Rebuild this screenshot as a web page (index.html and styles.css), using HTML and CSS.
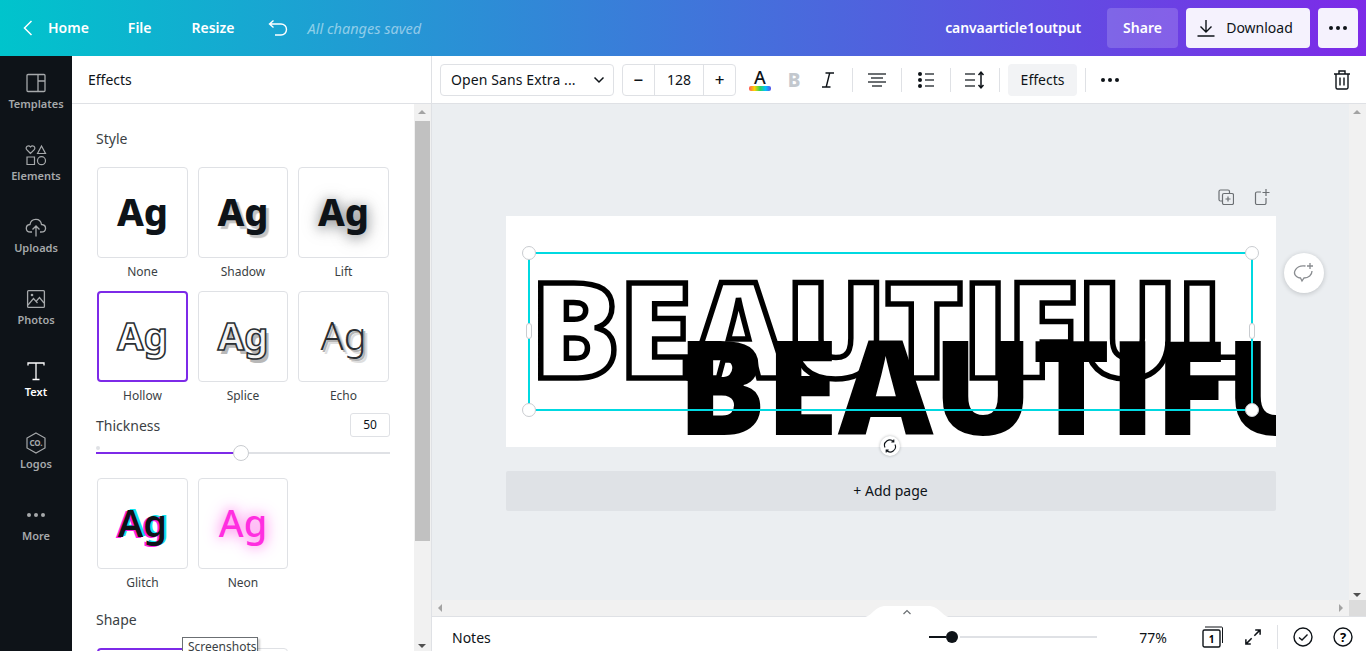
FILE: index.html
```html
<!DOCTYPE html>
<html>
<head>
<meta charset="UTF-8">
<title>canvaarticle1output</title>
<link rel="stylesheet" href="styles.css">
</head>
<body>
<header class="top">
	<svg class="back" width="12" height="18" viewBox="0 0 12 18"><path d="M9.500 2 L2.500 9 L9.500 16" fill="none" stroke="#fff" stroke-width="1.500"/></svg>
	<a class="top-link home">Home</a>
	<a class="top-link file">File</a>
	<a class="top-link resize">Resize</a>
	<svg class="undo" width="20" height="18" viewBox="0 0 20 18"><path d="M5.500 1.500 L1.500 5 L5.500 8.500 M1.500 5 H13 A5.500 5.500 0 0 1 13 16 H7" fill="none" stroke="#fff" stroke-width="1.400"/></svg>
	<span class="saved">All changes saved</span>
	<span class="doc-name">canvaarticle1output</span>
	<a class="btn-share">Share</a>
	<a class="btn-light btn-download">
		<svg width="18" height="18" viewBox="0 0 18 18"><path d="M9 1 V12.500 M3.500 7.500 L9 13 L14.500 7.500 M0.500 17 H17.500" fill="none" stroke="#0e1318" stroke-width="1.400"/></svg>
		Download
	</a>
	<a class="btn-light btn-more"><span class="dots"><i></i><i></i><i></i></span></a>
</header>

<div class="body">
	<nav class="rail">
		<a class="rail-item">
			<svg width="20" height="20" viewBox="0 0 20 20"><path d="M2 1.500 H18 A1 1 0 0 1 19 2.500 V17.500 A1 1 0 0 1 18 18.500 H2 A1 1 0 0 1 1 17.500 V2.500 A1 1 0 0 1 2 1.500 Z M12 1.500 V18.500 M12 8 H19" fill="none" stroke="#a6a9ab" stroke-width="1.300"/></svg>
			Templates
		</a>
		<a class="rail-item">
			<svg width="22" height="22" viewBox="0 0 22 22"><path d="M5.500 9.500 L1.500 5.300 C0 3 3.500 0.500 5.500 3 C7.500 0.500 11 3 9.500 5.300 Z M12.500 9.500 L16.500 2 L20.500 9.500 Z M2 13 H9.500 V20.500 H2 Z" fill="none" stroke="#a6a9ab" stroke-width="1.200"/><circle cx="16.500" cy="16.700" r="4" fill="none" stroke="#a6a9ab" stroke-width="1.200"/></svg>
			Elements
		</a>
		<a class="rail-item">
			<svg width="22" height="20" viewBox="0 0 22 20"><path d="M7 15 H5.500 C0 15 0 8 5 7.500 C6 1 15.500 0.500 16.500 7.500 C22 8 22 15 16 15 H15 M11 19.500 V9.500 M7.500 12.500 L11 9 L14.500 12.500" fill="none" stroke="#a6a9ab" stroke-width="1.300"/></svg>
			Uploads
		</a>
		<a class="rail-item">
			<svg width="20" height="20" viewBox="0 0 20 20"><rect x="1.600" y="1.600" width="16.800" height="16.800" rx="1" fill="none" stroke="#a6a9ab" stroke-width="1.300"/><circle cx="6" cy="6" r="1.300" fill="#a6a9ab"/><path d="M2 16 L7.500 9.500 L11.500 14 M10 12.500 L13.500 8.500 L18 14" fill="none" stroke="#a6a9ab" stroke-width="1.200"/></svg>
			Photos
		</a>
		<a class="rail-item active">
			<svg width="20" height="20" viewBox="0 0 20 20"><path d="M2 4.500 V2 H18 V4.500 M10 2 V18.500 M6.500 18.500 H13.500" fill="none" stroke="#fff" stroke-width="1.300"/></svg>
			Text
		</a>
		<a class="rail-item">
			<svg width="20" height="22" viewBox="0 0 20 22"><path d="M10 1 L19 6 V16 L10 21 L1 16 V6 Z" fill="none" stroke="#a6a9ab" stroke-width="1.200"/><text x="10" y="13.800" class="co">CO.</text></svg>
			Logos
		</a>
		<a class="rail-item">
			<span class="dots dots-rail"><i></i><i></i><i></i></span>
			More
		</a>
	</nav>

	<section class="panel">
		<div class="panel-head">Effects</div>
		<div class="panel-main">
			<div class="panel-scroll">
				<h3 class="panel-h">Style</h3>
				<div class="cards">
					<div class="card"><div class="thumb"><span class="ag ag-none">Ag</span></div><p>None</p></div>
					<div class="card"><div class="thumb"><span class="ag ag-shadow">Ag</span></div><p>Shadow</p></div>
					<div class="card"><div class="thumb"><span class="ag ag-lift">Ag</span></div><p>Lift</p></div>
					<div class="card"><div class="thumb selected"><span class="ag ag-hollow">Ag</span></div><p>Hollow</p></div>
					<div class="card"><div class="thumb"><span class="ag ag-splice">Ag</span></div><p>Splice</p></div>
					<div class="card"><div class="thumb"><span class="ag ag-echo">Ag</span></div><p>Echo</p></div>
				</div>
				<div class="thick-row">
					<span>Thickness</span>
					<span class="thick-val">50</span>
				</div>
				<div class="range">
					<i class="range-dot"></i>
					<i class="range-fill"></i>
					<i class="range-knob"></i>
				</div>
				<div class="cards cards-two">
					<div class="card"><div class="thumb"><span class="ag ag-glitch">Ag</span></div><p>Glitch</p></div>
					<div class="card"><div class="thumb"><span class="ag ag-neon">Ag</span></div><p>Neon</p></div>
				</div>
				<h3 class="panel-h shape-h">Shape</h3>
				<div class="cards cards-two">
					<div class="card"><div class="thumb selected"></div></div>
					<div class="card"><div class="thumb"></div></div>
				</div>
			</div>
			<div class="vbar">
				<span class="arrow-up"></span>
				<span class="vthumb"></span>
				<span class="arrow-down"></span>
			</div>
			<span class="tooltip">Screenshots</span>
		</div>
	</section>

	<main class="work">
		<div class="tools">
			<div class="font-select">
				<span>Open Sans Extra ...</span>
				<svg width="12" height="8" viewBox="0 0 12 8"><path d="M1.500 1.500 L6 6 L10.500 1.500" fill="none" stroke="#0e1318" stroke-width="1.500"/></svg>
			</div>
			<div class="stepper">
				<span class="step">&minus;</span>
				<span class="step-val">128</span>
				<span class="step">+</span>
			</div>
			<div class="tool tool-color">
				<span class="color-a">A</span>
				<i class="rainbow"></i>
			</div>
			<div class="tool tool-b">B</div>
			<div class="tool">
				<svg width="14" height="16" viewBox="0 0 14 16"><path d="M4.500 1 H13 M1 15 H9.500 M8.700 1 L5.200 15" fill="none" stroke="#0e1318" stroke-width="1.400"/></svg>
			</div>
			<i class="sep sep-a"></i>
			<div class="tool tool-mid">
				<svg width="18" height="14" viewBox="0 0 18 14"><path d="M0 1 H18 M3 5 H15 M0 9 H18 M4 13 H14" fill="none" stroke="#3d4145" stroke-width="1.500"/></svg>
			</div>
			<i class="sep"></i>
			<div class="tool tool-mid">
				<svg width="16" height="16" viewBox="0 0 16 16"><circle cx="2" cy="2" r="2" fill="#0e1318"/><circle cx="2" cy="8" r="2" fill="#0e1318"/><circle cx="2" cy="14" r="2" fill="#0e1318"/><path d="M7 2 H16 M7 8 H16 M7 14 H16" fill="none" stroke="#3d4145" stroke-width="1.500"/></svg>
			</div>
			<i class="sep"></i>
			<div class="tool tool-mid">
				<svg width="20" height="18" viewBox="0 0 20 18"><path d="M0 3 H10 M0 9 H10 M0 15 H10" fill="none" stroke="#3d4145" stroke-width="1.500"/><path d="M16 1 V17 M13.500 4 L16 1.200 L18.500 4 M13.500 14 L16 16.800 L18.500 14" fill="none" stroke="#0e1318" stroke-width="1.500"/></svg>
			</div>
			<i class="sep"></i>
			<a class="tool-effects">Effects</a>
			<i class="sep"></i>
			<div class="tool tool-mid"><span class="dots"><i></i><i></i><i></i></span></div>
			<svg class="trash" width="16" height="20" viewBox="0 0 16 20"><path d="M0 4 H16 M5 4 V1 H11 V4 M2 4 V17.500 A1.500 1.500 0 0 0 3.500 19 H12.500 A1.500 1.500 0 0 0 14 17.500 V4 M6 7.500 V15.500 M10 7.500 V15.500" fill="none" stroke="#0e1318" stroke-width="1.400"/></svg>
		</div>

		<div class="stage-row">
			<div class="stage">
				<div class="page-actions">
					<svg width="16" height="16" viewBox="0 0 16 16"><path d="M4 12 H2.500 A1.500 1.500 0 0 1 1 10.500 V2.500 A1.500 1.500 0 0 1 2.500 1 H10 A1.500 1.500 0 0 1 11.500 2.500 V4" fill="none" stroke="#6b6f73" stroke-width="1.200"/><rect x="4.500" y="4.500" width="11" height="11" rx="1.500" fill="none" stroke="#6b6f73" stroke-width="1.200"/><path d="M10 7.500 V12.500 M7.500 10 H12.500" stroke="#6b6f73" stroke-width="1.200"/></svg>
					<svg width="16" height="16" viewBox="0 0 16 16"><path d="M7 3 H3 A1.500 1.500 0 0 0 1.500 4.500 V14 A1.500 1.500 0 0 0 3 15.500 H10.500 A1.500 1.500 0 0 0 12 14 V9 M12 0 V7 M8.500 3.500 H15.500" fill="none" stroke="#6b6f73" stroke-width="1.200"/></svg>
				</div>
				<div class="page">
					<div class="word word-hollow">BEAUTIFUL</div>
					<div class="word word-solid">BEAUTIFUL</div>
					<div class="select-box">
						<i class="h h-tl"></i><i class="h h-tr"></i><i class="h h-bl"></i><i class="h h-br"></i>
						<i class="side side-l"></i><i class="side side-r"></i>
					</div>
				</div>
				<div class="rotate">
					<svg width="14" height="14" viewBox="0 0 14 14"><path d="M2 8.500 A5.300 5.300 0 0 1 10.500 2.500 M12 5.500 A5.300 5.300 0 0 1 3.500 11.500 M10.800 0.500 V3 H8.300 M3.200 13.500 V11 H5.700" fill="none" stroke="#0e1318" stroke-width="1.100"/></svg>
				</div>
				<div class="add-page">+ Add page</div>
				<div class="comment">
					<svg width="22" height="20" viewBox="0 0 22 20"><path d="M12.500 3 C3 1.500 -1 10 3.500 13.500 C5 14.700 6 15 7.500 15 L9 18 L11 15 C15.500 15 19 12 19 8 M17 0 V6 M14 3 H20" fill="none" stroke="#898c90" stroke-width="1.300"/></svg>
				</div>
			</div>
			<div class="vbar vbar-stage">
				<span class="arrow-up"></span>
				<span class="arrow-down"></span>
			</div>
		</div>

		<div class="hbar">
			<div class="hbar-track">
				<span class="arrow-left"></span>
				<span class="arrow-right"></span>
			</div>
			<span class="corner"></span>
		</div>

		<footer class="foot">
			<svg class="notch" width="86" height="13" viewBox="0 0 86 13"><path d="M0 12 C8 12 10 1 22 1 H64 C76 1 78 12 86 12 V13 H0 Z" fill="#fff"/><path d="M39.500 9 L43 5.500 L46.500 9" fill="none" stroke="#6b6f73" stroke-width="1.200"/></svg>
			<span class="notes">Notes</span>
			<div class="zoom-bar">
				<i class="zoom-fill"></i>
				<i class="zoom-knob"></i>
				<i class="zoom-rest"></i>
			</div>
			<span class="pct">77%</span>
			<svg class="pages" width="22" height="22" viewBox="0 0 22 22"><path d="M3 1 H19.500 A1 1 0 0 1 20.500 2 V17" fill="none" stroke="#0e1318" stroke-width="1"/><rect x="1" y="4" width="17" height="17" rx="1.500" fill="#fff" stroke="#0e1318" stroke-width="1.400"/><text x="9.500" y="16.500" class="page-num">1</text></svg>
			<svg class="expand" width="16" height="16" viewBox="0 0 18 18"><path d="M10.500 7.500 L17 1 M11.500 1 H17 V6.500 M7.500 10.500 L1 17 M1 11.500 V17 H6.500" fill="none" stroke="#0e1318" stroke-width="1.700"/></svg>
			<i class="sep foot-sep"></i>
			<svg class="check" width="20" height="20" viewBox="0 0 20 20"><circle cx="10" cy="10" r="9" fill="none" stroke="#0e1318" stroke-width="1.400"/><path d="M6 10.500 L9 13 L14.500 7.500" fill="none" stroke="#0e1318" stroke-width="1.400"/></svg>
			<svg class="help" width="20" height="20" viewBox="0 0 20 20"><circle cx="10" cy="10" r="9" fill="none" stroke="#0e1318" stroke-width="1.400"/><text x="10" y="15" class="q">?</text></svg>
		</footer>
	</main>
</div>
</body>
</html>
```

FILE: styles.css
```css
*{
	padding: 0;
	margin: 0;
	box-sizing: border-box;
}
html, body{
	height: 651px;
	overflow: hidden;
}
body{
	font-family: "Noto Sans", "Open Sans", sans-serif;
	font-size: 14px;
	color: #0e1318;
	display: flex;
	flex-direction: column;
}
i{
	display: block;
}

/* header */
.top{
	height: 56px;
	flex: none;
	display: flex;
	align-items: center;
	background: linear-gradient(90deg, #00c4cc, #7d2ae8);
	color: #fff;
	padding: 0 8px 1px 0;
}
.back{
	margin-left: 22px;
}
.top-link{
	font-weight: 600;
	font-size: 14px;
}
.home{
	margin-left: 14px;
}
.file{
	margin-left: 39px;
}
.resize{
	margin-left: 40px;
}
.undo{
	margin-left: 33px;
}
.saved{
	margin-left: 20px;
	font-size: 14.500px;
	font-style: italic;
	color: rgba(255,255,255,.5);
}
.doc-name{
	margin-left: auto;
	font-weight: 600;
	letter-spacing: -.1px;
}
.btn-share{
	margin-left: 26px;
	width: 71px;
	height: 40px;
	line-height: 40px;
	text-align: center;
	border-radius: 4px;
	background: rgba(255,255,255,.17);
	font-weight: 600;
}
.btn-light{
	height: 40px;
	border-radius: 4px;
	background: #f5f2fd;
	color: #0e1318;
	display: flex;
	align-items: center;
	justify-content: center;
}
.btn-download{
	margin-left: 8px;
	width: 124px;
	gap: 11px;
	padding-right: 6px;
}
.btn-more{
	margin-left: 8px;
	width: 40px;
}
.dots{
	display: flex;
	gap: 3px;
}
.dots i{
	width: 4px;
	height: 4px;
	border-radius: 50%;
	background: #0e1318;
}
.dots-rail i{
	background: #a6a9ab;
}

.body{
	flex: 1;
	display: flex;
	min-height: 0;
}

/* left rail */
.rail{
	width: 72px;
	flex: none;
	background: #0e1318;
}
.rail-item{
	height: 72px;
	display: flex;
	flex-direction: column;
	align-items: center;
	justify-content: center;
	gap: 2px;
	padding-bottom: 2px;
	font-size: 11px;
	font-weight: 600;
	color: #a6a9ab;
}
.rail-item svg, .rail-item .dots{
	height: 22px;
	align-items: center;
}
.rail-item.active{
	color: #fff;
}
.co{
	font-size: 8px;
	font-weight: 700;
	fill: #a6a9ab;
	text-anchor: middle;
}

/* effects panel */
.panel{
	width: 360px;
	flex: none;
	display: flex;
	flex-direction: column;
	border-right: 1px solid #dfe1e5;
}
.panel-head{
	height: 48px;
	flex: none;
	line-height: 47px;
	padding-left: 16px;
	border-bottom: 1px solid #dfe1e5;
}
.panel-main{
	flex: 1;
	display: flex;
	position: relative;
	min-height: 0;
}
.panel-scroll{
	flex: 1;
	overflow: hidden;
	padding: 24px 0 0 24px;
}
.panel-h{
	font-size: 14px;
	font-weight: 400;
	line-height: 22px;
	color: #3b3f44;
}
.cards{
	margin-top: 17px;
	display: grid;
	grid-template-columns: 91px 90px 91px;
	column-gap: 10px;
	row-gap: 11px;
	padding-left: 1px;
}
.card p{
	font-size: 12px;
	line-height: 16px;
	margin-top: 6px;
	text-align: center;
	color: #3b3f44;
}
.thumb{
	height: 91px;
	border: 1px solid #dfe1e5;
	border-radius: 4px;
	display: flex;
	align-items: center;
	justify-content: center;
	padding-bottom: 3px;
}
.thumb.selected{
	border: 2px solid #7d2ae8;
}
.ag{
	font-size: 38px;
	line-height: 1;
	font-weight: 800;
	color: #0e1318;
}
.ag-shadow{
	text-shadow: 3px 3px 1px #c4c4c4;
}
.ag-lift{
	text-shadow: 0 2px 12px rgba(14,19,24,.4), 0 2px 20px rgba(14,19,24,.25);
}
.ag-hollow{
	font-weight: 700;
	color: #fff;
	-webkit-text-stroke: 1.600px #2b2f33;
}
.ag-splice{
	font-weight: 700;
	color: #f4f4f4;
	-webkit-text-stroke: 1.600px #2b2f33;
	text-shadow: 3px 4px 0 #b8b8b8;
}
.ag-echo{
	font-weight: 300;
	color: #2b2f33;
	text-shadow: 2px 2px 0 #b4b4b4, 4px 4px 0 #dedede;
}
.ag-glitch{
	font-weight: 600;
	text-shadow: -2px 1px 0 #ff1ee6, 2px -1px 0 #12e4ee;
}
.ag-neon{
	font-weight: 500;
	color: #ff2ee0;
	text-shadow: 0 0 12px #ff7eec, 0 0 20px #ffb0f2;
}
.thick-row{
	margin-top: 9px;
	height: 24px;
	width: 294px;
	display: flex;
	justify-content: space-between;
	align-items: center;
	color: #3b3f44;
}
.thick-val{
	width: 40px;
	height: 24px;
	line-height: 22px;
	text-align: center;
	font-size: 12px;
	border: 1px solid #dfe1e5;
	border-radius: 3px;
	color: #0e1318;
}
.range{
	position: relative;
	margin-top: 15px;
	width: 294px;
	height: 2px;
	background: #dfe1e5;
}
.range-dot{
	position: absolute;
	left: 0;
	top: -6px;
	width: 4px;
	height: 4px;
	border-radius: 50%;
	background: #dfe1e5;
}
.range-fill{
	width: 140px;
	height: 2px;
	background: #7d2ae8;
}
.range-knob{
	position: absolute;
	left: 137px;
	top: -7px;
	width: 16px;
	height: 16px;
	border-radius: 50%;
	background: #fff;
	border: 1px solid #c9ccd0;
}
.cards-two{
	margin-top: 24px;
}
.shape-h{
	margin-top: 18px;
}
.shape-h + .cards{
	margin-top: 17px;
}
.tooltip{
	position: absolute;
	left: 110px;
	top: 533px;
	height: 20px;
	width: 76px;
	padding-left: 5px;
	background: #fff;
	border: 1px solid #6b6f73;
	font-size: 12px;
	line-height: 17px;
	color: #3b3f44;
	box-shadow: 2px 2px 2px rgba(0,0,0,.2);
}

/* scrollbars */
.vbar{
	width: 17px;
	flex: none;
	background: #f1f1f1;
	position: relative;
	padding: 17px 1px 0 1px;
}
.vthumb{
	display: block;
	height: 420px;
	background: #c1c1c1;
}
.arrow-up, .arrow-down, .arrow-left, .arrow-right{
	position: absolute;
	width: 0;
	height: 0;
	border-style: solid;
	border-color: transparent;
}
.arrow-up{
	top: 6px;
	left: 4px;
	border-width: 0 4px 4px 4px;
	border-bottom-color: #a3a3a3;
}
.arrow-down{
	bottom: 3px;
	left: 4px;
	border-width: 4px 4px 0 4px;
	border-top-color: #505050;
}
.arrow-left{
	left: 6px;
	top: 4px;
	border-width: 4px 4px 4px 0;
	border-right-color: #a3a3a3;
}
.arrow-right{
	right: 6px;
	top: 4px;
	border-width: 4px 0 4px 4px;
	border-left-color: #a3a3a3;
}

/* right side */
.work{
	flex: 1;
	min-width: 0;
	display: flex;
	flex-direction: column;
}
.tools{
	height: 48px;
	flex: none;
	display: flex;
	align-items: center;
	padding: 0 15px 0 8px;
	border-bottom: 1px solid #dfe1e5;
}
.font-select{
	width: 174px;
	height: 32px;
	border: 1px solid #dfe1e5;
	border-radius: 4px;
	display: flex;
	align-items: center;
	justify-content: space-between;
	padding: 0 8px 0 10px;
	letter-spacing: .1px;
}
.stepper{
	margin-left: 8px;
	height: 32px;
	width: 114px;
	border: 1px solid #dfe1e5;
	border-radius: 4px;
	display: flex;
	align-items: center;
	text-align: center;
}
.step{
	width: 31px;
	font-size: 17px;
	font-weight: 500;
	line-height: 30px;
}
.step-val{
	flex: 1;
	line-height: 30px;
	border-left: 1px solid #dfe1e5;
	border-right: 1px solid #dfe1e5;
}
.tool{
	width: 34px;
	height: 32px;
	display: flex;
	flex-direction: column;
	align-items: center;
	justify-content: center;
}
.tool-color{
	margin-left: 7px;
}
.color-a{
	font-size: 18px;
	font-weight: 500;
	line-height: 18px;
}
.rainbow{
	width: 22px;
	height: 5px;
	border-radius: 2px;
	background: linear-gradient(90deg, #ff5a5a, #ffd400, #30d158, #00c4ff, #5a50e8);
}
.tool-b{
	font-size: 19px;
	font-weight: 800;
	color: #c3c8ce;
}
.sep{
	width: 1px;
	height: 24px;
	flex: none;
	background: #dfe1e5;
}
.sep-a{
	margin-left: 7px;
}
.tool-mid{
	width: 48px;
}
.tool-effects{
	margin: 0 8px;
	width: 69px;
	height: 32px;
	line-height: 32px;
	text-align: center;
	background: #f2f3f5;
	border-radius: 4px;
}
.trash{
	margin-left: auto;
	margin-right: 1px;
}

/* stage */
.stage-row{
	flex: 1;
	display: flex;
	min-height: 0;
}
.stage{
	flex: 1;
	position: relative;
	background: #ebeef1;
	display: flex;
	flex-direction: column;
	align-items: center;
	padding-top: 84px;
}
.page-actions{
	width: 770px;
	height: 28px;
	display: flex;
	justify-content: flex-end;
	align-items: flex-start;
	gap: 20px;
	padding-right: 6px;
	padding-top: 1px;
}
.page{
	width: 770px;
	height: 231px;
	flex: none;
	background: #fff;
	position: relative;
	overflow: hidden;
}
.word{
	position: absolute;
	font-family: "Open Sans", sans-serif;
	font-weight: 800;
	white-space: nowrap;
	line-height: 1;
	color: #000;
}
.word-hollow{
	left: 25px;
	top: 44px;
	font-size: 133px;
	letter-spacing: -1.400px;
	color: #fff;
	-webkit-text-stroke: 5.500px #000;
}
.word-solid{
	left: 172px;
	top: 102px;
	font-size: 132px;
	letter-spacing: -.6px;
}
.select-box{
	position: absolute;
	left: 22px;
	top: 36px;
	width: 725px;
	height: 159px;
	border: 2px solid #00d9e1;
}
.h{
	position: absolute;
	width: 14px;
	height: 14px;
	border-radius: 50%;
	background: #fff;
	border: 1px solid #c9ccd0;
}
.h-tl{
	left: -8px;
	top: -8px;
}
.h-tr{
	right: -8px;
	top: -8px;
}
.h-bl{
	left: -8px;
	bottom: -8px;
}
.h-br{
	right: -8px;
	bottom: -8px;
}
.side{
	position: absolute;
	top: 69px;
	width: 6px;
	height: 16px;
	border-radius: 3px;
	background: #fff;
	border: 1px solid #c9ccd0;
}
.side-l{
	left: -4px;
}
.side-r{
	right: -4px;
}
.rotate{
	position: absolute;
	left: 448px;
	top: 332px;
	width: 20px;
	height: 20px;
	border-radius: 50%;
	background: #fff;
	box-shadow: 0 0 3px rgba(14,19,24,.3);
	display: flex;
	align-items: center;
	justify-content: center;
}
.add-page{
	width: 770px;
	height: 40px;
	margin-top: 24px;
	line-height: 39px;
	text-align: center;
	background: #dfe2e6;
	border-radius: 2px;
	font-size: 14px;
}
.comment{
	position: absolute;
	left: 852px;
	top: 149px;
	width: 40px;
	height: 40px;
	border-radius: 50%;
	background: #fff;
	box-shadow: 0 1px 5px rgba(14,19,24,.2);
	display: flex;
	align-items: center;
	justify-content: center;
}
.vbar-stage{
	padding: 0;
}
.hbar{
	height: 16px;
	flex: none;
	display: flex;
}
.hbar-track{
	flex: 1;
	position: relative;
	background: #f1f1f1;
}
.corner{
	width: 17px;
	background: #dcdcdc;
}

/* footer */
.foot{
	height: 35px;
	flex: none;
	position: relative;
	display: flex;
	align-items: center;
	padding: 6px 0 0 20px;
	border-top: 1px solid #dfe1e5;
}
.notch{
	position: absolute;
	left: 432px;
	top: -12px;
}
.notes{
	width: 477px;
}
.zoom-bar{
	width: 168px;
	display: flex;
	align-items: center;
}
.zoom-fill{
	width: 17px;
	height: 2px;
	background: #0e1318;
}
.zoom-knob{
	width: 12px;
	height: 12px;
	border-radius: 50%;
	background: #0e1318;
}
.zoom-rest{
	flex: 1;
	margin-left: 2px;
	height: 2px;
	background: #dfe1e5;
}
.pct{
	width: 112px;
	text-align: center;
}
.pages{
	margin-left: -7px;
}
.expand{
	margin-left: 21px;
}
.page-num{
	font-size: 10px;
	font-weight: 700;
	text-anchor: middle;
}
.foot-sep{
	margin-left: 16px;
}
.check{
	margin-left: 15px;
}
.help{
	margin-left: 20px;
}
.q{
	font-size: 13px;
	font-weight: 700;
	text-anchor: middle;
}
```
